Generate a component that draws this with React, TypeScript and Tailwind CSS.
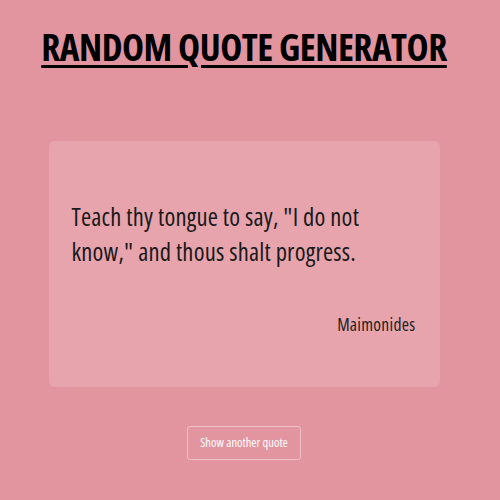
import { useState } from 'react';

const quotes = [
    { text: 'Teach thy tongue to say, "I do not know," and thous shalt progress.', author: 'Maimonides' },
];

const App = () => {
    const [index, setIndex] = useState(0);
    const quote = quotes[index];

    return (
        <div className="min-h-[500px] w-full pr-[12px] bg-[#e3959f] flex flex-col items-center font-['Open_Sans',sans-serif] [font-stretch:75%]">
            <h1 className="mt-[24px] text-[37.3px] leading-[46px] font-bold text-black underline decoration-[3px] underline-offset-[4px] tracking-[-0.5px]">
                RANDOM QUOTE GENERATOR
            </h1>

            <div className="mt-[71px] w-[391px] h-[246px] rounded-md bg-white/15 flex flex-col px-[23px] pt-[58px]">
                <p className="max-w-[330px] text-[24.6px] leading-[35px] tracking-[0.2px] text-[#1a1a1a]">{quote.text}</p>
                <p className="mt-auto mb-[50px] self-end pr-[1px] text-[17.5px] tracking-[0.3px] text-[#222]">{quote.author}</p>
            </div>

            <button
                onClick={() => setIndex((index + 1) % quotes.length)}
                className="mt-[39px] w-[114px] h-[34px] rounded-[3px] border border-white/40 text-white text-[12.5px]">
                Show another quote
            </button>
        </div>
    );
};

export default App;
